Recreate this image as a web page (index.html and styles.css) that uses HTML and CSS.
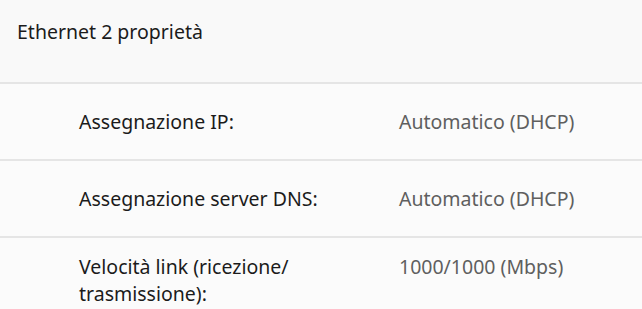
FILE: index.html
```html
<!DOCTYPE html>
<html lang="it">
<head>
  <meta charset="UTF-8">
  <meta name="viewport" content="width=device-width, initial-scale=1.0">
  <title>Ethernet 2 proprietà</title>
  <link rel="stylesheet" href="styles.css">
</head>
<body>
  <div class="pannello">
    <div class="titolo">Ethernet 2 proprietà</div>

    <div class="riga">
      <div class="voce">
        <span class="etichetta">Assegnazione IP:</span>
        <span class="valore">Automatico (DHCP)</span>
      </div>
    </div>

    <div class="riga">
      <div class="voce">
        <span class="etichetta">Assegnazione server DNS:</span>
        <span class="valore">Automatico (DHCP)</span>
      </div>
    </div>

    <div class="riga">
      <div class="voce">
        <span class="etichetta">Velocità link (ricezione/ trasmissione):</span>
        <span class="valore">1000/1000 (Mbps)</span>
      </div>
    </div>
  </div>
</body>
</html>
```

FILE: styles.css
```css
body {
  margin: 0;
  background-color: #f9f9f9;
  font-family: "Noto Sans", sans-serif;
  color: #1b1b1b;
  overflow: hidden;
}

.titolo {
  height: 82px;
  padding: 18px 0 0 17px;
  font-size: 19.5px;
  line-height: 27px;
  box-sizing: border-box;
}

.riga {
  border-top: 2px solid #e5e5e5;
  min-height: 77px;
  display: flex;
  align-items: center;
  padding: 15px 0;
  box-sizing: border-box;
  background-color: #fbfbfb;
}

.voce {
  display: grid;
  grid-template-columns: 320px 1fr;
  align-items: start;
  padding-left: 79px;
  font-size: 19.5px;
  line-height: 27px;
}

.etichetta {
  padding-right: 50px;
}

.valore {
  color: #5f5f5f;
}
```
